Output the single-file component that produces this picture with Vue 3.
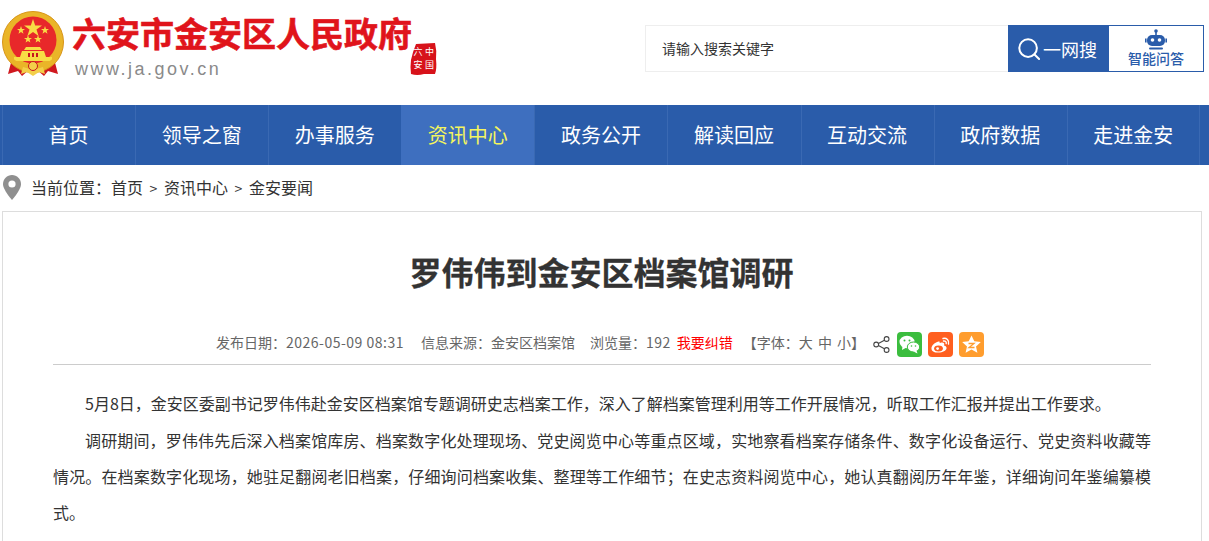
<template>
  <div class="page">
    <header class="top">
      <div class="logo">
        <svg class="emblem" viewBox="0 0 64 66" width="64" height="66">
          <path d="M12 44 L7 63 L17 60 L21 65 L29 58 Z" fill="#d0181f" />
          <path d="M52 44 L57 63 L47 60 L43 65 L35 58 Z" fill="#d0181f" />
          <circle cx="32" cy="31" r="30.5" fill="#eab528" />
          <circle cx="32" cy="31" r="30.5" fill="none" stroke="#d8951a" stroke-width="1" />
          <circle cx="32" cy="29" r="23.5" fill="#e8282a" />
          <g fill="#f8dc45">
            <polygon points="32,8 34.2,14.6 41,14.6 35.5,18.6 37.6,25 32,21 26.4,25 28.5,18.6 23,14.6 29.8,14.6" />
            <polygon points="20,15 21,18 24,18 21.6,19.8 22.5,22.8 20,21 17.5,22.8 18.4,19.8 16,18 19,18" />
            <polygon points="44,15 45,18 48,18 45.6,19.8 46.5,22.8 44,21 41.5,22.8 42.4,19.8 40,18 43,18" />
            <polygon points="27,24 28,27 31,27 28.6,28.8 29.4,31.6 27,30 24.6,31.6 25.4,28.8 23,27 26,27" />
            <polygon points="37,24 38,27 41,27 38.6,28.8 39.4,31.6 37,30 34.6,31.6 35.4,28.8 33,27 36,27" />
            <path d="M25 36 h14 l2 3 h-18 Z" />
            <path d="M21 40 h22 l2 6 h-26 Z" />
            <path d="M13 46 h38 v4 h-38 Z" />
          </g>
          <g fill="#c8161d">
            <rect x="27" y="42" width="2" height="4" />
            <rect x="31" y="42" width="2" height="4" />
            <rect x="35" y="42" width="2" height="4" />
          </g>
          <path d="M10 46 Q20 55 32 55 Q44 55 54 46 L55 51 Q44 60 32 60 Q20 60 9 51 Z" fill="#eab528" />
          <path d="M22 56 L32 59 L42 56 L44 63 L38 61 L32 65 L26 61 L20 63 Z" fill="#f3cf4a" />
          <circle cx="32" cy="55" r="4.5" fill="#f3cf4a" stroke="#c8161d" stroke-width="1" />
        </svg>
        <div class="logo-text">
          <div class="site-name">六安市金安区人民政府</div>
          <div class="site-url">www.ja.gov.cn</div>
        </div>
        <svg class="seal" viewBox="0 0 27 33" width="27" height="33">
          <path d="M6 1 L25 0 Q27 8 26 16 Q27 26 25 31 L14 31 Q7 33 1 31 Q0 24 1 17 Q3 8 6 1 Z" fill="#d7121a" />
          <text x="19.5" y="12" class="seal-char">中</text>
          <text x="19.5" y="25" class="seal-char">国</text>
          <text x="8" y="12" class="seal-char">六</text>
          <text x="8" y="25" class="seal-char">安</text>
        </svg>
      </div>
      <div class="search">
        <div class="search-input">请输入搜索关键字</div>
        <button class="search-btn">
          <svg viewBox="0 0 24 24" width="22" height="22" fill="none" stroke="#fff" stroke-width="2.2">
            <circle cx="11" cy="11" r="9.6" />
            <path d="M18 18 L23 23" stroke-linecap="round" />
          </svg>
          <span>一网搜</span>
        </button>
        <div class="ask">
          <svg viewBox="0 0 22 22" width="22" height="22" fill="#2a5caa">
            <circle cx="11" cy="2" r="1.8" />
            <rect x="10.2" y="2" width="1.6" height="4" />
            <rect x="2" y="6" width="18" height="11" rx="5" />
            <rect x="0" y="9.5" width="1.6" height="4" />
            <rect x="20.4" y="9.5" width="1.6" height="4" />
            <rect x="4" y="18.5" width="14" height="2" rx="1" />
            <circle cx="7.5" cy="11" r="1.8" fill="#fff" />
            <circle cx="14.5" cy="11" r="1.8" fill="#fff" />
          </svg>
          <span>智能问答</span>
        </div>
      </div>
    </header>

    <nav class="nav">
      <ul>
        <li v-for="item in navItems" :key="item" :class="{ on: item === '资讯中心' }">{{ item }}</li>
      </ul>
    </nav>

    <div class="crumb">
      <svg viewBox="0 0 18 25" width="18" height="25">
        <path d="M9 0 C4 0 0 4 0 9 C0 15 9 25 9 25 C9 25 18 15 18 9 C18 4 14 0 9 0 Z" fill="#8f8f8f" />
        <circle cx="9" cy="9" r="3.6" fill="#fff" />
      </svg>
      <span>当前位置：首页 <i>&gt;</i> 资讯中心 <i>&gt;</i> 金安要闻</span>
    </div>

    <main class="card">
      <h1>罗伟伟到金安区档案馆调研</h1>
      <div class="meta">
        <span class="date">发布日期：<b>2026-05-09 08:31</b></span>
        <span class="source">信息来源：金安区档案馆</span>
        <span class="views">浏览量：<b>192</b></span>
        <span class="fix">我要纠错</span>
        <span class="size">【字体：大 中 小】</span>
        <div class="share">
          <svg class="share-icon" viewBox="0 0 17 17" width="17" height="17" fill="none" stroke="#444" stroke-width="1.1">
            <circle cx="3.2" cy="8.5" r="2.4" />
            <circle cx="13.6" cy="3" r="2.4" />
            <circle cx="13.6" cy="14" r="2.4" />
            <path d="M5.4 7.4 L11.4 4.2 M5.4 9.6 L11.4 12.8" />
          </svg>
          <span class="badge wechat">
            <svg viewBox="0 0 25 25" width="25" height="25" fill="#fff">
              <ellipse cx="10" cy="10" rx="7.5" ry="6.2" />
              <path d="M5.5 14 L5 18 L9.5 15.5 Z" />
              <ellipse cx="16.5" cy="15" rx="6.2" ry="5" stroke="#3bbd3e" stroke-width="1" />
              <path d="M19.5 18.5 L20.5 21.5 L16.5 19.5 Z" />
              <circle cx="7.5" cy="8.5" r="1" fill="#3bbd3e" />
              <circle cx="12.5" cy="8.5" r="1" fill="#3bbd3e" />
              <circle cx="14.5" cy="14" r="0.8" fill="#3bbd3e" />
              <circle cx="18.5" cy="14" r="0.8" fill="#3bbd3e" />
            </svg>
          </span>
          <span class="badge weibo">
            <svg viewBox="0 0 25 25" width="25" height="25">
              <path d="M10.5 9.5 C6.5 10.5 3 14 3.5 17 C4 20 8 21 12 20.5 C16 20 19 18 18.5 15.5 C18.2 14 16.8 13.6 16 13.4 C16.8 11.4 15.8 10.3 14 10.4 C13 10.4 12 10.8 11.6 11 C12 9.6 11.5 9.2 10.5 9.5 Z" fill="#fff" />
              <ellipse cx="10.5" cy="16.5" rx="4.4" ry="3" fill="#ff5f1f" />
              <circle cx="9.6" cy="16.6" r="1.4" fill="#fff" />
              <path d="M15 6.5 C18.5 5.5 21.5 8.5 20.5 12 M15.5 9 C17.3 8.6 18.6 10 18.2 11.6" fill="none" stroke="#fff" stroke-width="1.4" stroke-linecap="round" />
            </svg>
          </span>
          <span class="badge qzone">
            <svg viewBox="0 0 25 25" width="25" height="25">
              <polygon points="12.5,3.5 15.3,9.3 21.8,10 17,14.4 18.4,20.8 12.5,17.6 6.6,20.8 8,14.4 3.2,10 9.7,9.3" fill="#fff" />
              <path d="M9.5 11.5 H15 L10 15.5 H15.5" fill="none" stroke="#ff9d2e" stroke-width="1.3" />
            </svg>
          </span>
        </div>
      </div>
      <article class="content">
        <p>5月8日，金安区委副书记罗伟伟赴金安区档案馆专题调研史志档案工作，深入了解档案管理利用等工作开展情况，听取工作汇报并提出工作要求。</p>
        <p>调研期间，罗伟伟先后深入档案馆库房、档案数字化处理现场、党史阅览中心等重点区域，实地察看档案存储条件、数字化设备运行、党史资料收藏等情况。在档案数字化现场，她驻足翻阅老旧档案，仔细询问档案收集、整理等工作细节；在史志资料阅览中心，她认真翻阅历年年鉴，详细询问年鉴编纂模式。</p>
        <p>罗伟伟强调，史志档案（党史、地方志）工作是一项基础性工作，全区各相关单位要提高站位，切实增强责任感和使命感，扎实做好各项工作。</p>
      </article>
    </main>
  </div>
</template>

<script setup>
const navItems = ['首页', '领导之窗', '办事服务', '资讯中心', '政务公开', '解读回应', '互动交流', '政府数据', '走进金安']
</script>

<style>
html,
body {
  margin: 0;
  background: #fff;
  overflow: hidden;
}
</style>

<style scoped>
.page {
  width: 1209px;
  height: 541px;
  overflow: hidden;
  font-family: "Noto Sans CJK SC", "Liberation Sans", sans-serif;
  color: #333;
}

.top {
  height: 105px;
  display: flex;
  justify-content: space-between;
  padding: 0 5px 0 1px;
  box-sizing: border-box;
}

.logo {
  display: flex;
  align-items: flex-start;
  padding-top: 11px;
}

.logo-text {
  margin-left: 7px;
}

.site-name {
  font-size: 34px;
  font-weight: 700;
  -webkit-text-stroke: 0.6px #e0141b;
  line-height: 44px;
  color: #e0141b;
  white-space: nowrap;
}

.site-url {
  margin: 3px 0 0 3px;
  font-family: "Liberation Sans", sans-serif;
  font-size: 18px;
  line-height: 22px;
  color: #8a8a8a;
  letter-spacing: 2.5px;
}

.seal {
  margin: 32px 0 0 -2px;
}

.seal-char {
  font-size: 9px;
  fill: #fff;
  text-anchor: middle;
}

.search {
  display: flex;
  height: 47px;
  margin-top: 25px;
}

.search-input {
  width: 346px;
  padding-left: 16px;
  border: 1px solid #eee;
  border-right: 0;
  font-size: 14px;
  line-height: 45px;
}

.search-btn {
  width: 101px;
  display: flex;
  align-items: center;
  justify-content: center;
  gap: 3px;
  padding: 0 2px 0 0;
  border: 0;
  background: #2a5caa;
  color: #fff;
  font-family: inherit;
  font-size: 18px;
}

.ask {
  width: 95px;
  box-sizing: border-box;
  border: 1px solid #2a5caa;
  border-left: 0;
  display: flex;
  flex-direction: column;
  align-items: center;
  padding-top: 3px;
  color: #2a5caa;
  font-size: 14px;
  font-weight: 500;
  line-height: 15px;
}

.nav {
  height: 60px;
  background: #2a5caa;
}

.nav ul {
  display: flex;
  margin: 0 0 0 2px;
  padding: 0;
  list-style: none;
}

.nav li {
  width: 133.1px;
  box-sizing: border-box;
  padding-right: 1px;
  border-left: 1px solid #3a69b3;
  color: #fff;
  font-size: 20px;
  line-height: 60px;
  text-align: center;
}

.nav li:last-child {
  border-right: 1px solid #3a69b3;
  padding-right: 0;
}

.nav li.on {
  background: #3e6fbf;
  border-left-color: #3e6fbf;
  color: #f4f55e;
}

.crumb {
  height: 44px;
  padding-bottom: 2px;
  display: flex;
  align-items: center;
  gap: 10px;
  padding-left: 3px;
  font-size: 16px;
}

.crumb i {
  font-style: normal;
  margin: 0 3px;
  font-size: 14px;
}

.card {
  width: 1200px;
  margin-left: 2px;
  box-sizing: border-box;
  height: 400px;
  padding: 0 50px;
  border: 1px solid #ddd;
  border-bottom: 0;
}

h1 {
  margin: 0;
  padding: 36px 1px 0 0;
  font-size: 32px;
  font-weight: 700;
  -webkit-text-stroke: 0.3px #333;
  line-height: 46px;
  text-align: center;
}

.meta {
  display: flex;
  align-items: center;
  height: 40px;
  margin-top: 28px;
  padding: 0 0 2px 163px;
  border-bottom: 1px solid #ccc;
  color: #666;
  font-size: 14px;
  white-space: nowrap;
}

.meta b {
  font-weight: 400;
  letter-spacing: 0.5px;
}

.date {
  margin-right: 17px;
}

.source {
  margin-right: 15px;
}

.views {
  margin-right: 6px;
}

.meta .fix {
  margin-right: 10px;
  color: #f00;
}

.meta .size {
  word-spacing: 2px;
}

.share {
  display: flex;
  align-items: center;
  margin: 5px 0 0 8px;
}

.share-icon {
  margin-right: 7px;
}

.badge {
  width: 25px;
  height: 25px;
  border-radius: 4px;
  margin-right: 6px;
  display: block;
}

.badge svg {
  display: block;
}

.wechat {
  background: #3bbd3e;
}

.weibo {
  background: #ff5f1f;
}

.qzone {
  background: #ff9d2e;
}

.content {
  padding-top: 19px;
  font-size: 16px;
  line-height: 36px;
  text-align: justify;
}

.content p {
  margin: 0;
  padding-top: 1px;
  text-indent: 2em;
}
</style>
